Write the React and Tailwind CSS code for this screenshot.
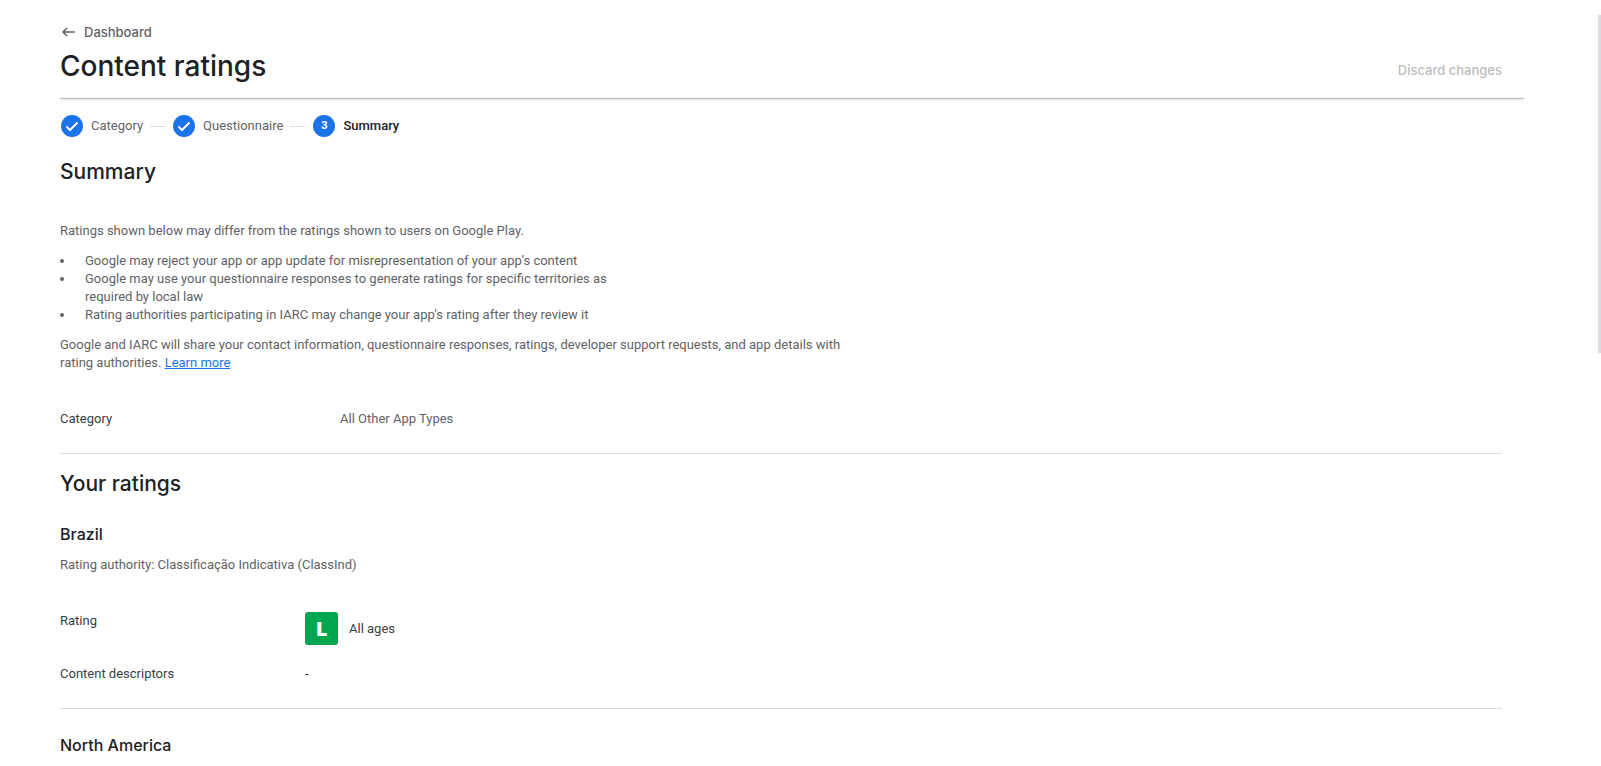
import React from 'react';

const steps = [
  { id: 1, name: 'Category', done: true },
  { id: 2, name: 'Questionnaire', done: true },
  { id: 3, name: 'Summary', done: false },
];

const notes = [
  'Google may reject your app or app update for misrepresentation of your app’s content',
  'Google may use your questionnaire responses to generate ratings for specific territories as required by local law',
  "Rating authorities participating in IARC may change your app's rating after they review it",
];

const Header = () => (
  <header className="ml-[60px] mr-[77px] pt-[22px]">
    <a href="#dashboard" className="flex h-5 w-fit items-center gap-2 font-['Inter',sans-serif] text-[13px] font-medium text-[#5f6368]">
      <svg width="16" height="16" viewBox="0 0 16 16" fill="none" stroke="currentColor" strokeWidth="1.5" aria-hidden="true">
        <path d="M15 8H3.5M7 4L3 8l4 4" />
      </svg>
      Dashboard
    </a>
    <div className="flex h-14 items-center justify-between pr-[22px]">
      <h1 className="mt-1.5 self-start font-['Inter',sans-serif] text-[28px] font-medium leading-9 text-[#202124]">Content ratings</h1>
      <button type="button" disabled className="font-['Inter',sans-serif] text-[13px] font-medium text-[#bdbdbd]">
        Discard changes
      </button>
    </div>
    <div className="h-px bg-[#b8b9bc] shadow-[0_1px_3px_rgba(60,64,67,0.3)]" />
  </header>
);

const Stepper = () => (
  <ol className="flex h-[54px] items-center pl-px">
    {steps.map((step, i) => (
      <li key={step.id} className="flex items-center" aria-current={step.done ? undefined : 'step'}>
        {i > 0 && <span className="ml-[7px] mr-2 h-px w-[15px] bg-[#dadce0]" />}
        <span className="flex size-[22px] items-center justify-center rounded-full bg-[#1a73e8] text-[11px] font-bold text-white">
          {step.done ? (
            <svg width="14" height="14" viewBox="0 0 14 14" fill="none" stroke="currentColor" strokeWidth="2" aria-label="Done">
              <path d="M1.5 7.5l3.5 3.5 7.5-7.5" />
            </svg>
          ) : (
            step.id
          )}
        </span>
        <span className={step.done ? 'ml-2 text-[#5f6368]' : 'ml-2 font-medium text-[#202124]'}>{step.name}</span>
      </li>
    ))}
  </ol>
);

const App = () => {
  return (
    <div className="relative bg-white font-['Roboto',sans-serif] text-[13px] leading-[18px] text-[#5f6368]">
      <Header />
      <main className="ml-[60px] mr-[99px]">
        <Stepper />

        <section>
          <h2 className="mt-[5px] font-['Inter',sans-serif] text-[21px] font-medium leading-7 text-[#202124]">Summary</h2>
          <p className="mt-9">Ratings shown below may differ from the ratings shown to users on Google Play.</p>
          <ul className="mt-3 max-w-[560px]">
            {notes.map((note) => (
              <li key={note} className="flex">
                <span className="mt-[7px] size-1 shrink-0 rounded-full bg-[#5f6368]" />
                <span className="ml-[21px]">{note}</span>
              </li>
            ))}
          </ul>
          <p className="mt-3 max-w-[800px]">
            <span>
              Google and IARC will share your contact information, questionnaire responses, ratings, developer support
              requests, and app details with
            </span>{' '}
            <span>rating authorities.</span>{' '}
            <a href="#learn-more" className="text-[#1a73e8] underline">Learn more</a>
          </p>
          <dl className="mt-[38px] flex border-b border-[#dadce0] pb-[25px]">
            <dt className="w-[280px] text-[#3c4043]">Category</dt>
            <dd>All Other App Types</dd>
          </dl>
        </section>

        <section>
          <h2 className="mt-4 font-['Inter',sans-serif] text-[21px] font-medium leading-7 text-[#202124]">Your ratings</h2>

          <div className="border-b border-[#dadce0] pb-[25px]">
            <h3 className="mt-6 font-['Inter',sans-serif] text-base font-medium leading-6 text-[#202124]">Brazil</h3>
            <p className="mt-2.5">Rating authority: Classificação Indicativa (ClassInd)</p>
            <dl className="mt-[38px] grid grid-cols-[245px_1fr] gap-y-5 text-[#3c4043]">
              <dt>Rating</dt>
              <dd className="flex items-center gap-[11px]">
                <span className="flex size-[33px] items-center justify-center rounded-[3px] bg-[#00a54f] font-['Open_Sans',sans-serif] text-xl font-extrabold text-white">
                  L
                </span>
                All ages
              </dd>
              <dt>Content descriptors</dt>
              <dd>-</dd>
            </dl>
          </div>

          <h3 className="mt-6 font-['Inter',sans-serif] text-base font-medium leading-6 text-[#202124]">North America</h3>
        </section>
      </main>
      <div className="absolute right-0 top-[15px] h-[338px] w-[3px] bg-[#dadce0]" />
    </div>
  );
};

export default App;
